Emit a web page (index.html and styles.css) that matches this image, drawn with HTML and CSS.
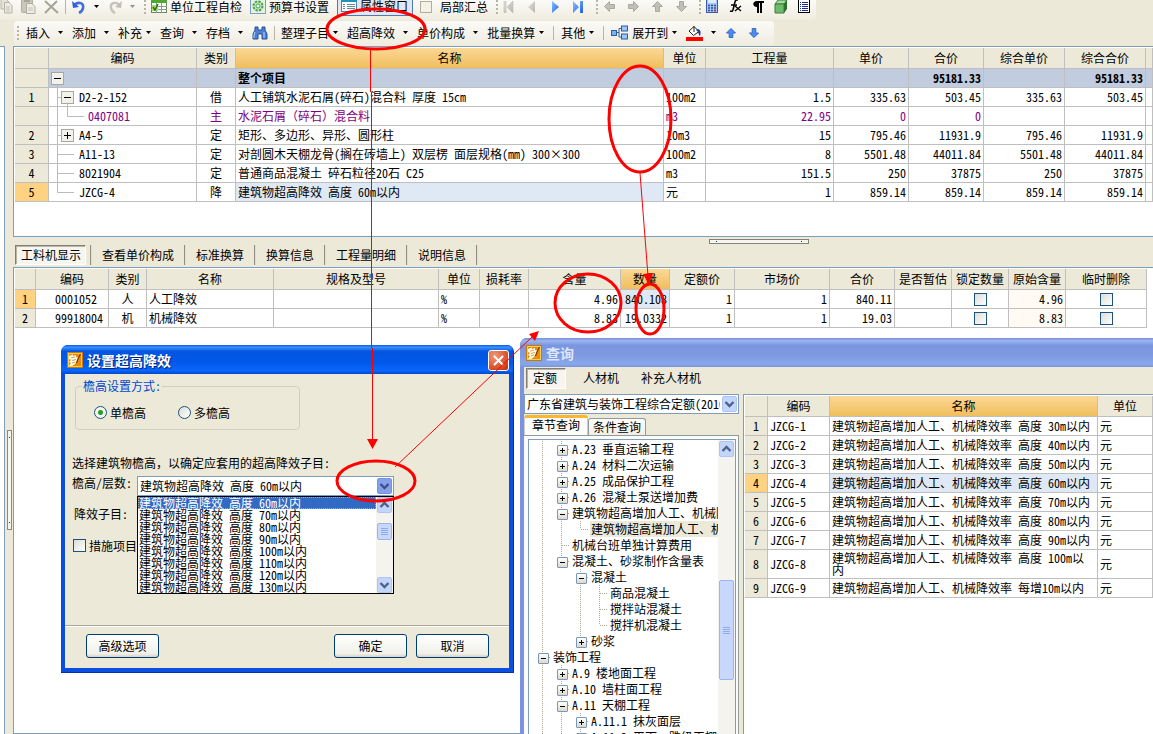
FILE: index.html
```html
<!DOCTYPE html>
<html lang="zh-CN">
<head>
<meta charset="utf-8">
<title>预算书</title>
<link rel="stylesheet" href="styles.css">
</head>
<body>
<svg class="defs" aria-hidden="true">
  <defs>
    <linearGradient id="blue" x1="0" y1="0" x2="1" y2="1"><stop offset="0" stop-color="#8cc4ff"/><stop offset="1" stop-color="#1c5fe0"/></linearGradient>
    <linearGradient id="gray" x1="0" y1="0" x2="1" y2="1"><stop offset="0" stop-color="#e4e4de"/><stop offset="1" stop-color="#b4b4ac"/></linearGradient>
    <symbol id="caret" viewBox="0 0 5 3"><path d="M0 0H5L2.5 3Z" fill="#000"/></symbol>
    <symbol id="logo" viewBox="0 0 16 16">
      <rect width="16" height="16" fill="#c87808"/><rect x="1" y="1" width="14" height="14" fill="#f8d050"/><rect x="2" y="2" width="12" height="12" fill="#e88c10"/>
      <path d="M2 4L6 2.500L6 4L9 3L9 5L11 5.500L10 9L8 12L5 14H2L4 11L2 10L4 8L2 7Z" fill="#fffbe4"/>
      <path d="M13.500 2L11 7L9.500 11" fill="none" stroke="#803c00" stroke-width="1.200"/><path d="M4 6L8 5M5 8.500L9 7.500M5 11L8 10" stroke="#c87820" stroke-width=".7"/>
    </symbol>
    <symbol id="chev-down" viewBox="0 0 15 16">
      <rect x=".5" y=".5" width="14" height="15" rx="1.5" fill="#c4d5fc" stroke="#b0c4f4"/><path d="M3.5 6L7.500 10L11.500 6" fill="none" stroke="#4d6185" stroke-width="2.4"/>
    </symbol>
    <symbol id="chev-up" viewBox="0 0 15 16">
      <rect x=".5" y=".5" width="14" height="15" rx="1.5" fill="#c4d5fc" stroke="#b0c4f4"/><path d="M3.500 10L7.500 6L11.500 10" fill="none" stroke="#4d6185" stroke-width="2.4"/>
    </symbol>
    <symbol id="chev-hot" viewBox="0 0 15 16">
      <rect x=".5" y=".5" width="14" height="15" rx="1.5" fill="#86a0ec" stroke="#7890e0"/><path d="M3.5 6L7.500 10L11.500 6" fill="none" stroke="#3d5185" stroke-width="2.4"/>
    </symbol>
    <symbol id="arrow" viewBox="0 0 11 11"><path d="M5.500 .5L10.500 5.500H7.500V10.500H3.500V5.500H.5Z"/></symbol>
  </defs>
</svg>

<div class="app">
  <div class="toolbar toolbar-top">
    <button class="tool" aria-label="复制"><svg width="14" height="15"><path d="M1 0H6L9 3V10H1Z" fill="#e6e4da" stroke="#bab8ac"/><path d="M4.500 3.500H9L12 6.500V14H4.500Z" fill="#eeece4" stroke="#b4b2a6"/><path d="M6 8H10M6 10H10M6 12H10" stroke="#c4c2b6"/></svg></button>
    <button class="tool paste" aria-label="粘贴"><svg width="15" height="15"><rect x=".5" y=".5" width="11" height="13" rx="1" fill="#c9c7bb" stroke="#b0aea2"/><rect x="3" y="0" width="6" height="3" fill="#a8a69a"/><path d="M5.500 4.500H11L14 7.500V14.500H5.500Z" fill="#eeece4" stroke="#b0aea2"/><path d="M7 9H12M7 11H12" stroke="#c4c2b6"/></svg></button>
    <button class="tool del" aria-label="删除"><svg width="15" height="14"><path d="M1 1L14 13M13 1L1 13" stroke="#a6a499" stroke-width="2"/></svg></button>
    <span class="sep"></span>
    <button class="tool undo" aria-label="撤销"><svg width="14" height="14"><path d="M2 5C7 1 12 3 11 8C10.500 11 9 12 7 13" fill="none" stroke="#3f6ee0" stroke-width="2.6"/><path d="M0 1L1 8L7 7Z" fill="#2f62d8"/></svg><svg class="caret"><use href="#caret"/></svg></button>
    <button class="tool redo" aria-label="恢复"><svg width="14" height="14"><path d="M12 5C7 1 2 3 3 8C3.500 11 5 12 7 13" fill="none" stroke="#c6c4ba" stroke-width="2.4"/><path d="M14 1L13 8L7 7Z" fill="#c0beb4"/></svg><svg class="caret dim"><use href="#caret"/></svg></button>
    <span class="grip"></span>
    <button class="tool"><svg width="16" height="15"><rect x=".5" y=".5" width="15" height="13" fill="#fff" stroke="#6a8a5a"/><rect width="16" height="4" fill="#4ea832"/><path d="M0 7.500H16M0 10.500H16M5.500 4V14M10.500 4V14" stroke="#8c9c84"/><rect x="1" y="6" width="6" height="6" fill="#a8dc70"/><path d="M2 8L4 11L7 5" fill="none" stroke="#187010" stroke-width="1.4"/></svg>单位工程自检</button>
    <button class="tool setting"><svg width="16" height="15"><rect x=".5" y=".5" width="15" height="14" fill="#e4f2e0" stroke="#7c9cc4"/><circle cx="8" cy="7" r="4.500" fill="#c4ecc0" stroke="#4ca04c" stroke-width="2" stroke-dasharray="2.400 1.100"/><circle cx="8" cy="7" r="2" fill="#fff" stroke="#4ca04c"/></svg>预算书设置</button>
    <button class="tool checked"><svg width="16" height="15"><rect x=".5" y=".5" width="15" height="13" fill="#fff" stroke="#4c84a4"/><rect width="16" height="4" fill="#1c94bc"/><path d="M2 6.500H4M6 6.500H14M2 8.500H4M6 8.500H14M2 10.500H4M6 10.500H14" stroke="#5c8ca4"/></svg>属性窗口</button>
    <label class="tool summary"><input type="checkbox" class="box dimbox">局部汇总</label>
    <span class="grip"></span>
    <span class="nav">
      <button class="tool" aria-label="第一"><svg width="12" height="12"><path d="M1 0H3V12H1ZM10 0V12L4 6Z" fill="url(#gray)" stroke="#c0c0b8" stroke-width=".6"/></svg></button>
      <button class="tool" aria-label="上一"><svg width="12" height="12"><path d="M9 0V12L2 6Z" fill="url(#gray)"/></svg></button>
      <button class="tool" aria-label="下一"><svg width="12" height="12"><path d="M3 0V12L10 6Z" fill="url(#blue)"/></svg></button>
      <button class="tool" aria-label="最后"><svg width="12" height="12"><path d="M1 0V12L7 6ZM8 0H11V12H8Z" fill="url(#blue)"/></svg></button>
    </span>
    <span class="grip"></span>
    <span class="nav arrows">
      <button class="tool" aria-label="左移"><svg width="11" height="11" class="left"><use href="#arrow"/></svg></button>
      <button class="tool" aria-label="右移"><svg width="11" height="11" class="right"><use href="#arrow"/></svg></button>
      <button class="tool" aria-label="上移"><svg width="11" height="11"><use href="#arrow"/></svg></button>
      <button class="tool" aria-label="下移"><svg width="11" height="11" class="down"><use href="#arrow"/></svg></button>
    </span>
    <span class="grip"></span>
    <span class="nav misc">
      <button class="tool" aria-label="计算器"><svg width="13" height="15"><rect x=".5" y=".5" width="11" height="13" fill="#a8c4f0" stroke="#3c5ca8"/><rect x="2" y="1" width="8" height="3" fill="#dcecff"/><path d="M2 6.500H10M2 9H10M2 11.500H10" stroke="#2c50a8" stroke-width="1.500" stroke-dasharray="2 1"/><path d="M8 11.500H10" stroke="#d03020" stroke-width="1.500"/></svg></button>
      <button class="tool" aria-label="函数"><svg width="13" height="15"><path d="M9 1C6 0 6 3 5 7C4 11 4 13 1 12M2 6H8" fill="none" stroke="#000" stroke-width="1.600"/><path d="M6 7L12 12M12 7L6 12" stroke="#000" stroke-width="1.300"/></svg></button>
      <button class="tool" aria-label="段落"><svg width="13" height="14"><path d="M12 1H5C0 1 0 7 5 7V13H7V3H8V13H10V3H12Z" fill="#000"/></svg></button>
      <button class="tool" aria-label="立方体"><svg width="14" height="15"><path d="M1 5L4 1H13L10 5Z" fill="#a4dca4" stroke="#3c7c3c"/><path d="M1 5H10V14H1Z" fill="#6cbc6c" stroke="#3c7c3c"/><path d="M10 5L13 1V10L10 14Z" fill="#2c702c"/></svg></button>
      <button class="tool" aria-label="列表"><svg width="12" height="15"><rect x=".5" y=".5" width="11" height="13" fill="#fff" stroke="#000"/><path d="M2 3.500H3M4 3.500H10M2 5.500H3M4 5.500H10M2 7.500H3M4 7.500H10M2 9.500H3M4 9.500H10M2 11.500H3M4 11.500H10" stroke="#1c2c8c"/></svg></button>
    </span>
  </div>

  <div class="toolbar toolbar-main">
    <span class="grip"></span>
    <button class="tool menu">插入<svg class="caret"><use href="#caret"/></svg></button>
    <button class="tool menu">添加<svg class="caret"><use href="#caret"/></svg></button>
    <button class="tool menu tight">补充<svg class="caret"><use href="#caret"/></svg></button>
    <button class="tool menu">查询<svg class="caret"><use href="#caret"/></svg></button>
    <button class="tool menu">存档<svg class="caret"><use href="#caret"/></svg></button>
    <button class="tool" aria-label="查找"><svg width="16" height="14"><path d="M3 1H6V4H10V1H13V4L15 8V13H10V8H6V13H1V8L3 4Z" fill="#4c80d0" stroke="#28509c"/><path d="M3 6L2 9V12M12 6L12 12" stroke="#b4d4ff" fill="none"/></svg></button>
    <span class="sep"></span>
    <button class="tool menu tight">整理子目<svg class="caret"><use href="#caret"/></svg></button>
    <button class="tool menu">超高降效<svg class="caret"><use href="#caret"/></svg></button>
    <button class="tool menu">单价构成<svg class="caret"><use href="#caret"/></svg></button>
    <button class="tool menu tight">批量换算<svg class="caret"><use href="#caret"/></svg></button>
    <span class="sep short"></span>
    <button class="tool menu tight">其他<svg class="caret"><use href="#caret"/></svg></button>
    <span class="sep short"></span>
    <button class="tool menu tight expand"><svg width="17" height="15"><path d="M5 7.500H8M8 3.500V12M8 3.500H11M8 12H11" fill="none" stroke="#3c5c94"/><rect x=".5" y="5.500" width="5" height="5" fill="#7cb0f4" stroke="#2c5ca8"/><rect x="10.500" y="1" width="6" height="5" fill="#9cc8f8" stroke="#2c5ca8"/><rect x="10.500" y="9" width="6" height="5" fill="#9cc8f8" stroke="#2c5ca8"/></svg>展开到<svg class="caret"><use href="#caret"/></svg></button>
    <button class="tool menu fill" aria-label="填充颜色"><svg width="17" height="16"><path d="M3 6L8 1.500L13 6.500L7.500 10.500Z" fill="#fff" stroke="#222"/><path d="M8 1V7" stroke="#222"/><path d="M12 4C15 5 15 8 14 11C12 9 13 7 10 5Z" fill="#1c3ca0"/><rect y="12" width="17" height="4" fill="#f00"/></svg><svg class="caret"><use href="#caret"/></svg></button>
    <span class="nav updown">
      <button class="tool" aria-label="上移"><svg width="10" height="10"><use href="#arrow"/></svg></button>
      <button class="tool" aria-label="下移"><svg width="10" height="10" class="down"><use href="#arrow"/></svg></button>
    </span>
  </div>

  <main class="work">
    <div class="side"></div>
    <div class="vsplit"><span></span></div>
    <div class="content">
      <section class="panel panel-top">
        <table class="grid budget">
          <colgroup><col class="w34"><col class="w148"><col class="w39"><col><col class="w42"><col class="w128"><col class="w75"><col class="w75"><col class="w81"><col class="w81"><col class="w7"></colgroup>
          <thead><tr><th></th><th>编码</th><th>类别</th><th class="hot">名称</th><th>单位</th><th>工程量</th><th>单价</th><th>合价</th><th>综合单价</th><th>综合合价</th><th></th></tr></thead>
          <tbody>
            <tr class="total"><th></th><td class="code"><svg class="twig"><path d="M8.500 15V18" stroke="#bbb"/><rect x="2.500" y="3.500" width="12" height="12" fill="#f2f1ea" stroke="#a8a8a0"/><path d="M5 9.500H12" stroke="#000"/></svg></td><td></td><td>整个项目</td><td></td><td></td><td></td><td class="num">95181.33</td><td></td><td class="num">95181.33</td><td></td></tr>
            <tr><th>1</th><td class="code"><svg class="twig"><path d="M8.500 0V18M8 9.500H12M18.500 15V18" stroke="#bbb"/><rect x="12.500" y="3.500" width="12" height="12" fill="#f2f1ea" stroke="#a8a8a0"/><path d="M15 9.500H22" stroke="#000"/></svg>D2-2-152</td><td class="mid">借</td><td>人工铺筑水泥石屑(碎石)混合料 厚度 15cm</td><td>100m2</td><td class="num">1.5</td><td class="num">335.63</td><td class="num">503.45</td><td class="num">335.63</td><td class="num">503.45</td><td></td></tr>
            <tr class="purple"><th></th><td class="code"><svg class="twig deep"><path d="M8.500 0V18M18.500 0V9.500H35" stroke="#bbb" fill="none"/></svg>0407081</td><td class="mid">主</td><td class="wide">水泥石屑（碎石）混合料</td><td>m3</td><td class="num">22.95</td><td class="num">0</td><td class="num">0</td><td></td><td></td><td></td></tr>
            <tr><th>2</th><td class="code"><svg class="twig"><path d="M8.500 0V18M8 9.500H12" stroke="#bbb"/><rect x="12.500" y="3.500" width="12" height="12" fill="#f2f1ea" stroke="#a8a8a0"/><path d="M15 9.500H22M18.500 6V13" stroke="#000"/></svg>A4-5</td><td class="mid">定</td><td>矩形、多边形、异形、圆形柱</td><td>10m3</td><td class="num">15</td><td class="num">795.46</td><td class="num">11931.9</td><td class="num">795.46</td><td class="num">11931.9</td><td></td></tr>
            <tr><th>3</th><td class="code"><svg class="twig"><path d="M8.500 0V18M8 9.500H25" stroke="#bbb"/></svg>A11-13</td><td class="mid">定</td><td>对剖圆木天棚龙骨(搁在砖墙上) 双层楞 面层规格(mm) 300×300</td><td>100m2</td><td class="num">8</td><td class="num">5501.48</td><td class="num">44011.84</td><td class="num">5501.48</td><td class="num">44011.84</td><td></td></tr>
            <tr><th>4</th><td class="code"><svg class="twig"><path d="M8.500 0V18M8 9.500H25" stroke="#bbb"/></svg>8021904</td><td class="mid">定</td><td>普通商品混凝土 碎石粒径20石 C25</td><td>m3</td><td class="num">151.5</td><td class="num">250</td><td class="num">37875</td><td class="num">250</td><td class="num">37875</td><td></td></tr>
            <tr class="current"><th>5</th><td class="code"><svg class="twig"><path d="M8.500 0V9.500H25" stroke="#bbb" fill="none"/></svg>JZCG-4</td><td class="mid">降</td><td class="pick">建筑物超高降效 高度 60m以内</td><td>元</td><td class="num">1</td><td class="num">859.14</td><td class="num">859.14</td><td class="num">859.14</td><td class="num">859.14</td><td></td></tr>
          </tbody>
        </table>
      </section>
      <div class="hsplit"><span></span></div>
      <nav class="tabs">
        <button class="on">工料机显示</button><button>查看单价构成</button><button>标准换算</button><button>换算信息</button><button>工程量明细</button><button>说明信息</button>
      </nav>
      <section class="panel panel-bottom">
        <table class="grid detail">
          <colgroup><col class="w21"><col class="w73"><col class="w38"><col class="w127"><col class="w165"><col class="w41"><col class="w49"><col class="w92"><col class="w49"><col class="w65"><col class="w95"><col class="w65"><col class="w57"><col class="w57"><col class="w57"><col class="w81"></colgroup>
          <thead><tr><th></th><th>编码</th><th>类别</th><th>名称</th><th>规格及型号</th><th>单位</th><th>损耗率</th><th>含量</th><th class="hot">数量</th><th>定额价</th><th>市场价</th><th>合价</th><th>是否暂估</th><th>锁定数量</th><th>原始含量</th><th>临时删除</th></tr></thead>
          <tbody>
            <tr class="current"><th>1</th><td class="inset">0001052</td><td class="mid">人</td><td>人工降效</td><td></td><td>%</td><td></td><td class="num">4.96</td><td class="num pick">840.108</td><td class="num">1</td><td class="num">1</td><td class="num">840.11</td><td></td><td class="mid"><input type="checkbox" class="box" aria-label="锁定数量"></td><td class="num pale">4.96</td><td class="mid"><input type="checkbox" class="box" aria-label="临时删除"></td></tr>
            <tr><th>2</th><td class="inset">99918004</td><td class="mid">机</td><td>机械降效</td><td></td><td>%</td><td></td><td class="num">8.83</td><td class="num">19.0332</td><td class="num">1</td><td class="num">1</td><td class="num">19.03</td><td></td><td class="mid"><input type="checkbox" class="box" aria-label="锁定数量"></td><td class="num pale">8.83</td><td class="mid"><input type="checkbox" class="box" aria-label="临时删除"></td></tr>
          </tbody>
        </table>
      </section>
    </div>
  </main>
</div>

<section class="window setup" role="dialog" aria-label="设置超高降效">
  <header class="titlebar"><svg width="16" height="16"><use href="#logo"/></svg><h1>设置超高降效</h1>
    <button class="close" aria-label="关闭"><svg width="11" height="11"><path d="M1 1L10 10M10 1L1 10" stroke="#fff" stroke-width="2"/></svg></button></header>
  <form class="setup-body">
    <fieldset><legend>檐高设置方式:</legend>
      <label><input type="radio" name="mode" checked>单檐高</label>
      <label><input type="radio" name="mode">多檐高</label>
    </fieldset>
    <p class="hint">选择建筑物檐高<span class="wide">，</span>以确定应套用的超高降效子目:</p>
    <div class="field"><label for="height">檐高/层数:</label>
      <div class="combo">
        <select id="height"><option>建筑物超高降效 高度 60m以内</option></select>
        <svg class="drop"><use href="#chev-hot"/></svg>
        <div class="popup">
          <ul role="listbox">
            <li class="sel">建筑物超高降效 高度 60m以内</li><li>建筑物超高降效 高度 70m以内</li><li>建筑物超高降效 高度 80m以内</li><li>建筑物超高降效 高度 90m以内</li><li>建筑物超高降效 高度 100m以内</li><li>建筑物超高降效 高度 110m以内</li><li>建筑物超高降效 高度 120m以内</li><li>建筑物超高降效 高度 130m以内</li>
          </ul>
          <div class="scroll"><svg class="sbtn"><use href="#chev-up"/></svg><i class="thumb"></i><svg class="sbtn"><use href="#chev-down"/></svg></div>
        </div>
      </div>
    </div>
    <p class="subitem">降效子目:</p>
    <label class="measure"><input type="checkbox" class="box">措施项目</label>
    <footer><button type="button" class="btn">高级选项</button><button type="button" class="btn ok">确定</button><button type="button" class="btn">取消</button></footer>
  </form>
</section>

<section class="window query" role="dialog" aria-label="查询">
  <header class="titlebar"><svg width="16" height="16"><use href="#logo"/></svg><h1>查询</h1></header>
  <div class="query-body">
    <nav class="modes"><button class="on">定额</button><button>人材机</button><button>补充人材机</button></nav>
    <div class="columns">
      <div class="left-col">
        <div class="combo library"><select aria-label="定额库"><option>广东省建筑与装饰工程综合定额(2010)</option></select><svg class="drop"><use href="#chev-down"/></svg></div>
        <div class="subtabs"><button class="on">章节查询</button><button>条件查询</button></div>
        <div class="tree-frame"><div class="tree-box">
          <ul class="tree">
            <li><i class="v"></i><i class="v h plus"></i><span>A.23 垂直运输工程</span></li>
            <li><i class="v"></i><i class="v h plus"></i><span>A.24 材料二次运输</span></li>
            <li><i class="v"></i><i class="v h plus"></i><span>A.25 成品保护工程</span></li>
            <li><i class="v"></i><i class="v h plus"></i><span>A.26 混凝土泵送增加费</span></li>
            <li><i class="v"></i><i class="v h minus"></i><span>建筑物超高增加人工、机械降效</span></li>
            <li><i class="v"></i><i class="v"></i><i class="half h"></i><span class="sel">建筑物超高增加人工、机械降效率</span></li>
            <li><i class="v"></i><i class="v h"></i><span>机械台班单独计算费用</span></li>
            <li><i class="v"></i><i class="half h minus"></i><span>混凝土、砂浆制作含量表</span></li>
            <li><i class="v"></i><i></i><i class="v h minus"></i><span>混凝土</span></li>
            <li><i class="v"></i><i></i><i class="v"></i><i class="v h"></i><span>商品混凝土</span></li>
            <li><i class="v"></i><i></i><i class="v"></i><i class="v h"></i><span>搅拌站混凝土</span></li>
            <li><i class="v"></i><i></i><i class="v"></i><i class="half h"></i><span>搅拌机混凝土</span></li>
            <li><i class="v"></i><i></i><i class="half h plus"></i><span>砂浆</span></li>
            <li><i class="v h minus"></i><span>装饰工程</span></li>
            <li><i class="v"></i><i class="v h plus"></i><span>A.9 楼地面工程</span></li>
            <li><i class="v"></i><i class="v h plus"></i><span>A.10 墙柱面工程</span></li>
            <li><i class="v"></i><i class="v h minus"></i><span>A.11 天棚工程</span></li>
            <li><i class="v"></i><i class="v"></i><i class="v h plus"></i><span>A.11.1 抹灰面层</span></li>
            <li><i class="v"></i><i class="v"></i><i class="v h plus"></i><span>A.11.2 平面、跌级天棚</span></li>
          </ul>
          <div class="scroll"><svg class="sbtn"><use href="#chev-up"/></svg><i class="thumb"></i></div>
        </div></div>
      </div>
      <div class="panel result">
        <table class="grid norms">
          <colgroup><col class="w23"><col class="w62"><col><col class="w55"></colgroup>
          <thead><tr><th></th><th>编码</th><th class="hot">名称</th><th>单位</th></tr></thead>
          <tbody>
            <tr><th>1</th><td>JZCG-1</td><td>建筑物超高增加人工、机械降效率 高度 30m以内</td><td>元</td></tr>
            <tr><th>2</th><td>JZCG-2</td><td>建筑物超高增加人工、机械降效率 高度 40m以内</td><td>元</td></tr>
            <tr><th>3</th><td>JZCG-3</td><td>建筑物超高增加人工、机械降效率 高度 50m以内</td><td>元</td></tr>
            <tr class="current"><th>4</th><td>JZCG-4</td><td class="pick">建筑物超高增加人工、机械降效率 高度 60m以内</td><td>元</td></tr>
            <tr><th>5</th><td>JZCG-5</td><td>建筑物超高增加人工、机械降效率 高度 70m以内</td><td>元</td></tr>
            <tr><th>6</th><td>JZCG-6</td><td>建筑物超高增加人工、机械降效率 高度 80m以内</td><td>元</td></tr>
            <tr><th>7</th><td>JZCG-7</td><td>建筑物超高增加人工、机械降效率 高度 90m以内</td><td>元</td></tr>
            <tr class="tall"><th>8</th><td>JZCG-8</td><td>建筑物超高增加人工、机械降效率 高度 100m以内</td><td>元</td></tr>
            <tr><th>9</th><td>JZCG-9</td><td>建筑物超高增加人工、机械降效率 每增10m以内</td><td>元</td></tr>
          </tbody>
        </table>
      </div>
    </div>
  </div>
</section>

<svg class="marks" aria-hidden="true">
  <g fill="none" stroke="#f00" stroke-width="3">
    <ellipse cx="376" cy="29" rx="49" ry="20"/><ellipse cx="640" cy="119" rx="31" ry="53"/><ellipse cx="588" cy="303" rx="33" ry="29"/><ellipse cx="650" cy="309" rx="14" ry="25"/><ellipse cx="376" cy="481" rx="39" ry="20"/>
  </g>
  <path d="M370.500 49V92M371.500 92V348M372.500 348V440M640 173L648 276M395 467L532 337" fill="none" stroke="#f00"/>
  <path d="M367 439H378L372.500 449ZM643 274L653 273L648.500 284ZM539 331L535 341L529 334Z" fill="#f00"/>
</svg>
</body>
</html>
```
FILE: styles.css
```css
* { box-sizing: border-box; }
body {
  margin: 0;
  height: 100vh;
  position: relative;
  overflow: hidden;
  background: #ece9d8;
  color: #000;
  font: 12px/12px "Noto Sans CJK SC", sans-serif;
  font-feature-settings: "hwid";
}
button, select, input { font: inherit; font-feature-settings: inherit; color: inherit; margin: 0; }
svg { flex: none; display: block; }
ul { list-style: none; margin: 0; padding: 0; }
p { margin: 0; }
.wide { font-feature-settings: normal; }
.defs { position: absolute; width: 0; height: 0; }
.app { height: 100%; display: flex; flex-direction: column; }

/* toolbars */
.toolbar { display: flex; align-items: center; width: max-content; background: linear-gradient(#fbfaf7, #efecdf); border-radius: 0 0 4px 0; }
.toolbar-top { height: 20px; padding: 0 6px 7px 0; }
.toolbar-main { height: 25px; margin: 1px 0 0 14px; padding: 0 7px 2px 3px; border-radius: 4px 4px 4px 0; }
.tool { display: flex; align-items: center; gap: 3px; border: 0; padding: 0; background: none; white-space: nowrap; }
.caret { width: 5px; height: 3px; }
.dim { opacity: .4; }
.sep { width: 1px; height: 14px; margin: 0 6px; background: #b8b5a4; }
.sep.short { margin: 0 7px 0 0; }
.grip { width: 2px; height: 14px; background: repeating-linear-gradient(#b8b5a4 0 2px, transparent 2px 4px); }
.paste { margin-left: 7px; }
.del { margin-left: 8px; }
.undo, .redo { gap: 8px; margin-right: 9px; }
.toolbar-top .grip { margin-right: 5px; }
.setting { margin: 0 8px; }
.checked { height: 22px; margin-top: -4px; padding: 2px 4px 0 3px; border: 1px solid #5078b8; background: #e2e6ee; }
.summary { gap: 8px; margin: 0 8px 0 7px; }
.nav { display: flex; align-items: center; gap: 11px; margin-right: 12px; }
.nav .tool { width: 12px; justify-content: center; }
.arrows { fill: #c0c0b6; stroke: #aaa99e; gap: 12px; }
.left { transform: rotate(-90deg); }
.right { transform: rotate(90deg); }
.down { transform: rotate(180deg); }
.misc { margin-right: 0; }
.updown { fill: #4c8cf0; stroke: #2c60c8; margin: 0 7px 0 0; }
.toolbar-main .grip { margin-right: 7px; }
.menu { gap: 8px; margin-right: 9px; }
.menu.tight { gap: 4px; }

/* main area */
.work { flex: 1; display: flex; min-height: 0; }
.side { width: 5px; background: #fff; border-top: 1px solid #7f9db9; border-right: 1px solid #7f9db9; }
.vsplit { width: 8px; display: flex; align-items: center; justify-content: center; padding-top: 180px; }
.vsplit span { width: 5px; height: 100px; border: 1px solid #8c8a80; background: linear-gradient(#1c2c8c, #1c2c8c) 1px 6px / 1px 1px no-repeat, linear-gradient(#1c2c8c, #1c2c8c) 1px 91px / 1px 1px no-repeat, #f6f5ee; }
.content { flex: 1; min-width: 0; display: flex; flex-direction: column; }
.panel { background: #fff; border: 1px solid #7f9db9; border-right: 0; padding: 1px 0 0 1px; }
.panel-top { height: 191px; }
.panel-bottom { flex: 1; }
.hsplit { height: 8px; display: flex; align-items: center; justify-content: center; padding-left: 352px; }
.hsplit span { width: 100px; height: 5px; border: 1px solid #84827a; background: linear-gradient(#1c2c8c, #1c2c8c) 6px 1px / 1px 1px no-repeat, linear-gradient(#1c2c8c, #1c2c8c) 91px 1px / 1px 1px no-repeat, #f6f5ee; }
.tabs { display: flex; align-items: flex-start; height: 22px; padding-left: 2px; }
.tabs button { height: 20px; border: 0; border-right: 2px groove #e4e0cc; background: none; padding: 0 10px 1px; }
.tabs button.on, .modes button.on {
  border: 1px solid #fff; border-top-color: #808074; border-left-color: #808074; box-shadow: inset 1px 1px #b8b5a6; background: #f7f5ee;
}
.tabs button.on { padding: 0 4px 1px 5px; margin-right: 4px; }
.tabs button.on + button { border-left: 2px groove #e4e0cc; }

/* grids */
.grid { table-layout: fixed; border-collapse: separate; border-spacing: 0; }
.budget, .norms { width: 100%; }
.detail { width: 1132px; }
.grid th, .grid td { height: 19px; border: 0 solid #bfbfbf; border-width: 0 1px 1px 0; padding: 0 2px 1px; font-weight: normal; white-space: nowrap; overflow: hidden; text-align: left; }
.grid th { background: #ece9d8; text-align: center; padding: 0 0 1px; }
.grid thead th { height: 21px; }
.grid .hot { background: linear-gradient(#fbd896, #f0be5c); }
.grid .num { text-align: right; }
.grid .mid { text-align: center; }
.grid .inset { padding-left: 19px; }
.grid .pale { background: #fffbf4; }
.grid .pick { background: #dfe9f6; }
.grid .current th { background: #ffd282; }
.grid .total td { background: #c1cddf; font-weight: bold; }
.grid .purple td { color: #800080; }
.grid .code { padding: 0; line-height: 18px; }
.twig { display: inline-block; vertical-align: top; width: 30px; height: 18px; }
.twig.deep { width: 39px; }
.grid .tall td { height: 29px; white-space: normal; word-break: break-all; }
.w7 { width: 7px; } .w21 { width: 21px; } .w23 { width: 23px; } .w34 { width: 34px; } .w38 { width: 38px; } .w39 { width: 39px; }
.w41 { width: 41px; } .w42 { width: 42px; } .w49 { width: 49px; } .w55 { width: 55px; } .w57 { width: 57px; } .w62 { width: 62px; }
.w65 { width: 65px; } .w73 { width: 73px; } .w75 { width: 75px; } .w81 { width: 81px; } .w92 { width: 92px; } .w95 { width: 95px; }
.w127 { width: 127px; } .w128 { width: 128px; } .w148 { width: 148px; } .w165 { width: 165px; }
.box { appearance: none; width: 13px; height: 13px; border: 1px solid #1c5180; background: linear-gradient(135deg, #dcdcd7, #fff); vertical-align: middle; }
.dimbox { width: 12px; height: 12px; border-color: #b0ad9c; background: #f4f2e8; }

/* windows */
.window { position: absolute; display: flex; flex-direction: column; border-radius: 7px 7px 0 0; overflow: hidden; }
.titlebar { display: flex; align-items: center; gap: 4px; height: 29px; padding: 1px 1px 0 2px; }
.titlebar h1 { flex: 1; margin: 0; font-size: 14px; line-height: 16px; color: #fff; }
.setup { left: 61px; top: 345px; width: 453px; min-height: 328px; padding: 0 4px 4px; background: #0a4fe0; border: solid #0831a8; border-width: 0 1px 1px 0; }
.setup .titlebar { margin: 0 -4px; padding: 1px 4px 0 6px; background: linear-gradient(#0a5cf0, #3a90ff 8%, #0455e0 22%, #0058ea 60%, #0a66fa 88%, #0048c8); }
.setup h1 { text-shadow: 1px 1px #00237a; }
.close { display: flex; align-items: center; justify-content: center; width: 21px; height: 21px; padding: 0; border: 1px solid #fff; border-radius: 3px; background: radial-gradient(circle at 30% 25%, #f09878, #d84a20 70%, #b83008); }
.setup-body { flex: 1; display: flex; flex-direction: column; padding: 6px 0 0; background: #ece9d8; }
fieldset { display: flex; gap: 32px; width: 225px; height: 50px; margin: 0 0 0 10px; padding: 14px 18px 0; border: 1px solid #d0d0bf; border-radius: 4px; }
legend { margin-left: -12px; padding: 0 1px; color: #0046d5; }
fieldset label { display: flex; align-items: center; gap: 3px; height: 13px; }
input[type="radio"] { appearance: none; width: 13px; height: 13px; border: 1px solid #1c5180; border-radius: 50%; background: linear-gradient(135deg, #dcdcd7, #fff); }
input[type="radio"]:checked { background: radial-gradient(circle, #21a121 0 2px, #f4f4f0 3px); }
.hint { margin: 27px 0 7px 7px; }
.field { display: flex; align-items: flex-start; margin-left: 7px; }
.field > label { width: 65px; padding-top: 1px; }
.combo { position: relative; width: 257px; height: 20px; }
.combo select { appearance: none; width: 100%; height: 100%; border: 1px solid #7f9db9; border-radius: 0; background: #fff; padding: 0 18px 0 2px; line-height: 16px; overflow: hidden; }
.drop { position: absolute; right: 2px; top: 2px; width: 15px; height: 16px; }
.popup { position: absolute; left: 0; right: 0; top: 100%; display: flex; border: 1px solid #000; background: #fff; line-height: 12px; z-index: 2; }
.popup ul { flex: 1; }
.popup li { height: 12px; padding-left: 1px; white-space: nowrap; }
.popup .sel { background: #316ac5; color: #fff; outline: 1px dotted #e0a040; outline-offset: -1px; }
.scroll { display: flex; flex-direction: column; width: 17px; padding: 0 1px; background: #f4f3ee; }
.sbtn { width: 15px; height: 16px; }
.thumb { height: 17px; border: 1px solid #9cb4ec; border-radius: 2px; background: repeating-linear-gradient(#8cabf0 0 1px, transparent 1px 2px) center / 7px 7px no-repeat, #c8d8fc; }
.popup .thumb { margin: 10px 0 auto; }
.subitem { margin: 12px 0 0 9px; }
.measure { display: flex; align-items: center; gap: 3px; margin: 19px 0 0 8px; }
.setup footer { display: flex; gap: 9px; margin-top: auto; padding: 8px 20px 10px 21px; border-top: 1px solid #aca899; box-shadow: inset 0 1px #fff; }
.btn { width: 73px; height: 24px; border: 1px solid #003c74; border-radius: 3px; background: linear-gradient(#fff, #f0f0ea 85%, #d8d0c4); padding: 0; }
.ok { margin-left: auto; }

.query { left: 520px; right: 0; top: 338px; bottom: 0; padding-left: 4px; background: #7b92e0; border-radius: 7px 0 0 0; }
.query .titlebar { margin-left: -4px; padding-left: 6px; flex: none; background: linear-gradient(#7590dc, #9bb6f0 10%, #7b96e0 25%, #7e9ae2 60%, #88a8ec 90%, #7a94dc); }
.query h1 { color: #dce6fa; }
.query-body { flex: 1; min-height: 0; display: flex; flex-direction: column; background: #ece9d8; }
.modes { display: flex; height: 27px; padding: 1px 2px 5px; }
.modes button { height: 21px; padding: 0 17px 2px 5px; border: 0; background: none; white-space: nowrap; }
.modes button.on { padding: 0 8px 1px 6px; margin-right: 12px; }
.columns { flex: 1; min-height: 0; display: flex; gap: 4px; }
.left-col { width: 215px; display: flex; flex-direction: column; min-height: 0; }
.library { width: 100%; flex: none; }
.subtabs { display: flex; align-items: flex-end; height: 21px; flex: none; }
.subtabs button { height: 17px; padding: 0 4px; border: 1px solid #919b9c; border-bottom: 0; border-radius: 3px 3px 0 0; background: linear-gradient(#fff, #f0efe6); }
.subtabs button.on { height: 20px; padding: 0 7px 3px; border-color: #c8ccc8; border-top: 3px solid #ffb62e; background: #fcfcfa; }
.tree-frame { flex: 1; min-height: 0; display: flex; padding: 3px 2px 0 4px; background: #fbfbf8; border: solid #919b9c; border-width: 1px 1px 0 0; }
.tree-box { flex: 1; min-width: 0; display: flex; border: 1px solid #7f9db9; border-bottom: 0; background: #fff; overflow: hidden; }
.tree { flex: 1; min-width: 0; padding: 1px 0 0 4px; overflow: hidden; }
.tree li { display: flex; height: 16px; line-height: 16px; white-space: nowrap; }
.tree span { padding-left: 1px; }
.tree .sel { background: #ece9d8; padding-right: 20px; }
.tree i { flex: none; width: 19px; height: 16px; --v: linear-gradient(transparent, transparent); --h: linear-gradient(transparent, transparent);
  background: var(--v), var(--h); background-repeat: no-repeat; background-position: 9px 0, 10px 8px; background-size: 1px 16px, 8px 1px; }
.tree .v, .tree .half { --v: repeating-linear-gradient(#a8a590 0 1px, transparent 1px 2px); }
.tree .half { background-size: 1px 8px, 8px 1px; }
.tree .h { --h: repeating-linear-gradient(90deg, #a8a590 0 1px, transparent 1px 2px); }
.tree .plus, .tree .minus { display: grid; place-content: start; padding: 4px 5px; }
.tree .plus::before, .tree .minus::before { content: ""; width: 9px; height: 9px; border: 1px solid #7898b5; border-radius: 1px;
  background: linear-gradient(#000, #000) center / 5px 1px no-repeat, linear-gradient(#fff, #dcd8cc); }
.tree .plus::before { background: linear-gradient(#000, #000) center / 5px 1px no-repeat, linear-gradient(#000, #000) center / 1px 5px no-repeat, linear-gradient(#fff, #dcd8cc); }
.query .scroll .thumb { height: 100px; margin-top: 123px; flex: none; }
.query .scroll { padding-top: 1px; }
.result { flex: 1; min-width: 0; border-bottom: 0; }

.marks { position: absolute; left: 0; top: 0; width: 100%; height: 100%; pointer-events: none; z-index: 5; }
```
